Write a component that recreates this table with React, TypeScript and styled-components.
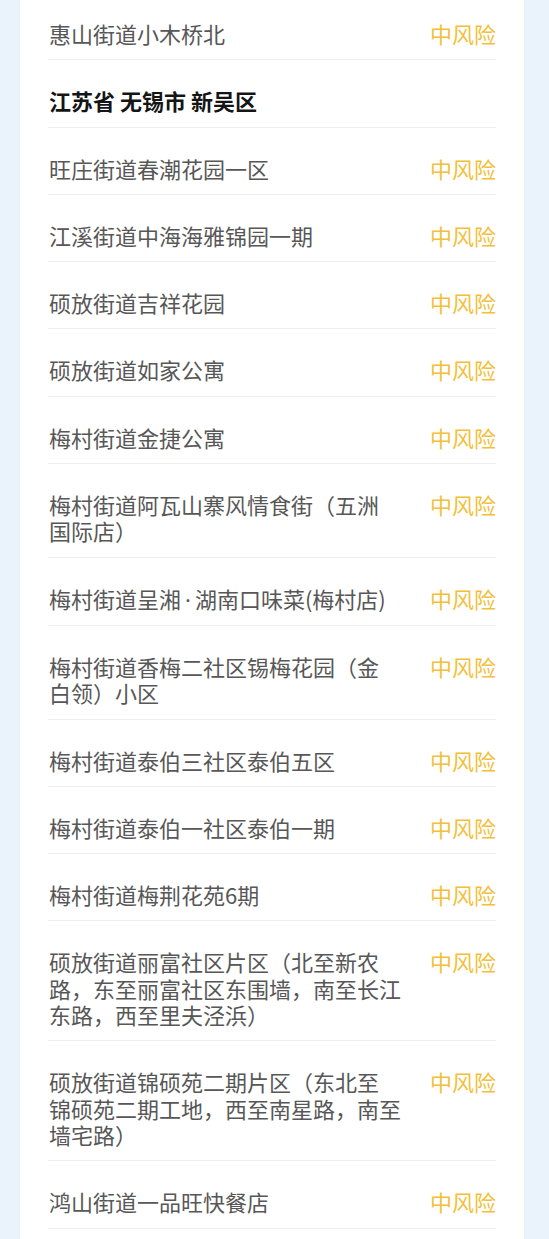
import React from "react";
import styled, { createGlobalStyle } from "styled-components";

const GlobalStyle = createGlobalStyle`
  html, body {
    margin: 0;
    padding: 0;
    background: #eaf3fc;
  }
  body {
    font-family: "Noto Sans CJK SC", "Noto Sans", sans-serif;
  }
`;

const Page = styled.div`
  min-height: 1239px;
  padding: 0 25px 0 20px;
  background: #eaf3fc;
`;

const Card = styled.div`
  margin-top: -7px;
  background: #ffffff;
  padding: 0 28px 40px;
`;

const Row = styled.div`
  display: flex;
  align-items: flex-start;
  justify-content: space-between;
  padding: 27px 0 13px 1px;
  border-bottom: 1px solid #eeeeee;
  line-height: 26.3px;
  font-size: 22px;
`;

const Name = styled.div`
  flex: 1;
  color: #575757;
  white-space: pre-line;
`;

const Region = styled.div`
  color: #151515;
  font-weight: 700;
  white-space: pre;
`;

const Risk = styled.span<{ $level: string }>`
  flex-shrink: 0;
  margin-left: 24px;
  color: ${({ $level }) => ($level === "高风险" ? "#e5463b" : "#f2bf3a")};
`;

const Dot = styled.span`
  font-family: "Noto Sans", sans-serif;
  margin: 0 4px;
`;

type Item = { region?: string; name?: React.ReactNode; risk?: string };

const items: Item[] = [
  { name: "惠山街道小木桥北", risk: "中风险" },
  { region: "江苏省 无锡市 新吴区" },
  { name: "旺庄街道春潮花园一区", risk: "中风险" },
  { name: "江溪街道中海海雅锦园一期", risk: "中风险" },
  { name: "硕放街道吉祥花园", risk: "中风险" },
  { name: "硕放街道如家公寓", risk: "中风险" },
  { name: "梅村街道金捷公寓", risk: "中风险" },
  { name: "梅村街道阿瓦山寨风情食街（五洲\n国际店）", risk: "中风险" },
  {
    name: (
      <>
        梅村街道呈湘<Dot>·</Dot>湖南口味菜(梅村店)
      </>
    ),
    risk: "中风险",
  },
  { name: "梅村街道香梅二社区锡梅花园（金\n白领）小区", risk: "中风险" },
  { name: "梅村街道泰伯三社区泰伯五区", risk: "中风险" },
  { name: "梅村街道泰伯一社区泰伯一期", risk: "中风险" },
  { name: "梅村街道梅荆花苑6期", risk: "中风险" },
  {
    name: "硕放街道丽富社区片区（北至新农\n路，东至丽富社区东围墙，南至长江\n东路，西至里夫泾浜）",
    risk: "中风险",
  },
  {
    name: "硕放街道锦硕苑二期片区（东北至\n锦硕苑二期工地，西至南星路，南至\n墙宅路）",
    risk: "中风险",
  },
  { name: "鸿山街道一品旺快餐店", risk: "中风险" },
];

const App = () => {
  return (
    <>
      <GlobalStyle />
      <Page>
        <Card>
          {items.map((item, i) =>
            item.region ? (
              <Row key={i}>
                <Region>{item.region}</Region>
              </Row>
            ) : (
              <Row key={i}>
                <Name>{item.name}</Name>
                <Risk $level={item.risk || ""}>{item.risk}</Risk>
              </Row>
            )
          )}
        </Card>
      </Page>
    </>
  );
};

export default App;
